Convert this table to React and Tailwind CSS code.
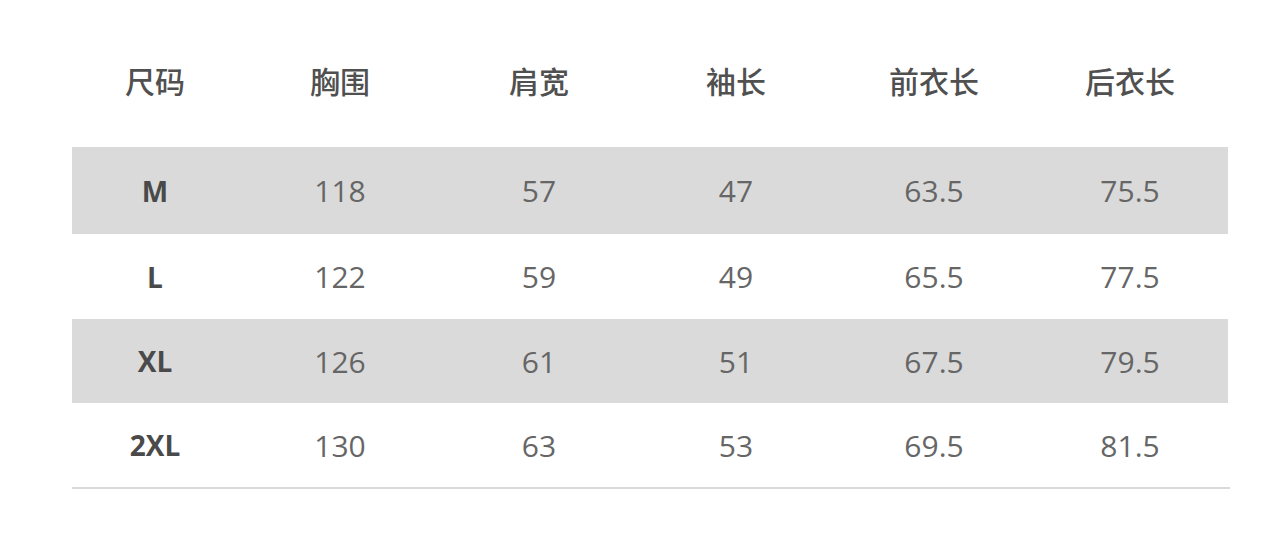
import React from "react";

const headers = ["尺码", "胸围", "肩宽", "袖长", "前衣长", "后衣长"];
const rows = [
  ["M", "118", "57", "47", "63.5", "75.5"],
  ["L", "122", "59", "49", "65.5", "77.5"],
  ["XL", "126", "61", "51", "67.5", "79.5"],
  ["2XL", "130", "63", "53", "69.5", "81.5"],
];

const cols = "grid grid-cols-[166px_204px_194px_200px_196px_196px]";

export default function App() {
  return (
    <div
      className="w-[1272px] h-[545px] bg-white overflow-hidden"
      style={{ fontFamily: '"Open Sans", "Noto Sans CJK SC", sans-serif' }}
    >
      <div className="ml-[72px] w-[1156px]">
        <div className={`${cols} h-[147px] items-center pt-[14px]`}>
          {headers.map((h) => (
            <div
              key={h}
              className="text-center text-[30px] font-medium text-[#505050]"
              style={{ fontFamily: '"Noto Sans CJK SC", sans-serif' }}
            >
              {h}
            </div>
          ))}
        </div>
        {rows.map((r, i) => (
          <div
            key={r[0]}
            className={`${cols} ${i === 0 ? "h-[87px]" : i === 1 ? "h-[85px]" : "h-[84px]"} items-center ${
              i % 2 === 0 ? "bg-[#dadada]" : "bg-white"
            }`}
          >
            {r.map((c, j) => (
              <div
                key={j}
                className={`text-center ${
                  j === 0 ? "font-bold text-[#4a4a4a] text-[28px]" : "text-[#666666] text-[30px]"
                }`}
              >
                {c}
              </div>
            ))}
          </div>
        ))}
        <div className="h-[2px] bg-[#d9d9d9] w-[1158px]" />
      </div>
    </div>
  );
}
